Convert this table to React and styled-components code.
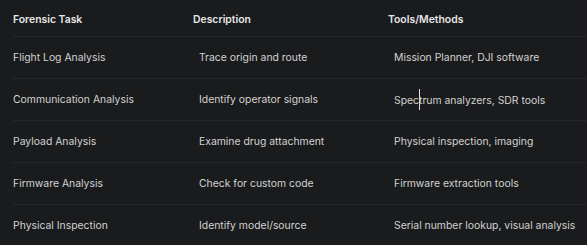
import styled, { createGlobalStyle } from "styled-components"

const rows = [
  ["Flight Log Analysis", "Trace origin and route", "Mission Planner, DJI software"],
  ["Communication Analysis", "Identify operator signals", "Spectrum analyzers, SDR tools"],
  ["Payload Analysis", "Examine drug attachment", "Physical inspection, imaging"],
  ["Firmware Analysis", "Check for custom code", "Firmware extraction tools"],
  ["Physical Inspection", "Identify model/source", "Serial number lookup, visual analysis"],
]

export default function App() {
  return (
    <>
      <Global />
      <Wrap>
        <Table>
          <thead>
            <tr>
              <Th $w={180}>Forensic Task</Th>
              <Th $w={195}>Description</Th>
              <Th>Tools/Methods</Th>
            </tr>
          </thead>
          <tbody>
            {rows.map((r, i) => (
              <Row key={i}>
                <Td $first>{r[0]}</Td>
                <Td>{r[1]}</Td>
                <Td>
                  {i === 1 ? (
                    <>
                      Spec<Caret />trum analyzers, SDR tools
                    </>
                  ) : (
                    r[2]
                  )}
                </Td>
              </Row>
            ))}
          </tbody>
        </Table>
      </Wrap>
    </>
  )
}

const Global = createGlobalStyle`
  html, body {
    margin: 0;
    background: #1a1b1d;
  }
  body {
    font-family: Inter, "Noto Sans", sans-serif;
  }
`

const Wrap = styled.div`
  width: 587px;
  height: 245px;
  padding: 0 0 0 13px;
  box-sizing: border-box;
  overflow: hidden;
`

const Table = styled.table`
  width: 100%;
  border-collapse: collapse;
  font-size: 10.4px;
`

const Th = styled.th`
  width: ${(p) => (p.$w ? `${p.$w}px` : "auto")};
  height: 36px;
  padding: 4px 0 0;
  text-align: left;
  font-weight: 600;
  color: #e6e6e6;
  border-bottom: 1px solid #262729;
  box-sizing: border-box;
`

const Row = styled.tr`
  & + & td {
    border-top: 1px solid #262729;
  }
`

const Td = styled.td`
  height: 42px;
  padding: 0 0 0 ${(p) => (p.$first ? 0 : 6)}px;
  color: #d2d2d2;
  white-space: nowrap;
  box-sizing: border-box;
`

const Caret = styled.span`
  display: inline-block;
  width: 1px;
  height: 21px;
  margin: 0 -0.5px;
  background: #e0e0e0;
  vertical-align: -6px;
`
